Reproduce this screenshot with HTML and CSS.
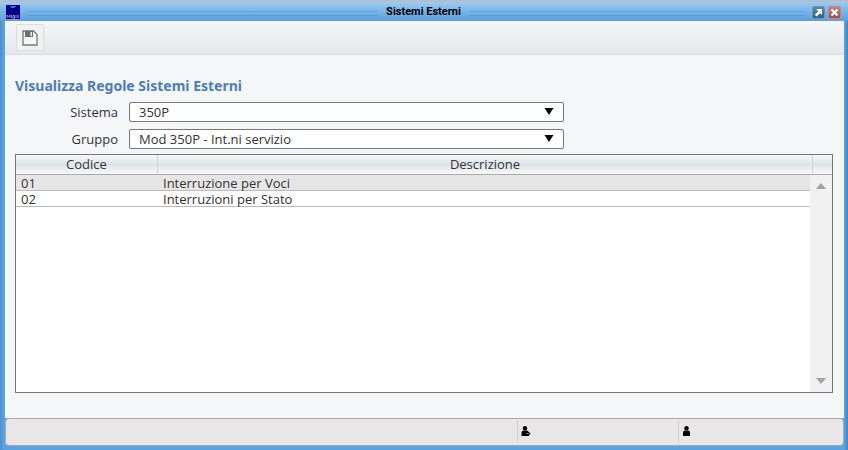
FILE: index.html
```
<!DOCTYPE html>
<html lang="it">
<head>
    <meta charset="UTF-8">
    <meta name="viewport" content="width=device-width, initial-scale=1.0">
    <title>Sistemi Esterni</title>
    <link rel="stylesheet" href="styles.css">
</head>
<body>
    <div class="window">
        <header class="titlebar">
            <div class="title-side">
                <svg class="app-icon" width="14" height="14" viewBox="0 0 14 14" aria-hidden="true">
                    <rect width="14" height="14" fill="#00008c"/>
                    <path d="M4 1.500h6M5 2.500h4" stroke="#5a5ac8" stroke-width="1"/>
                    <path d="M1 13V10l1.500 2L4 10v3M5.500 10v3M7 10.500h1.500v3H7zM10 10v3M12 10v3M11.500 11h1.500" fill="none" stroke="#b9a0dc" stroke-width=".8"/>
                </svg>
                <span class="stripes"></span>
            </div>
            <h1>Sistemi Esterni</h1>
            <div class="title-side">
                <span class="stripes"></span>
                <button type="button" class="win-btn" aria-label="Ingrandisci">
                    <svg width="9" height="9" viewBox="0 0 9 9"><path d="M2 1h6v6L6.200 5.200 2.500 8.500.800 6.800 4.300 3.300z" fill="#fff"/></svg>
                </button>
                <button type="button" class="win-btn win-close" aria-label="Chiudi">
                    <svg width="9" height="9" viewBox="0 0 9 9"><path d="M1.500 1.500l6 6M7.500 1.500l-6 6" stroke="#fff" stroke-width="2.200"/></svg>
                </button>
            </div>
        </header>

        <div class="toolbar">
            <button type="button" class="tool-btn" aria-label="Salva">
                <svg width="16" height="16" viewBox="0 0 16 16">
                    <path d="M1 1h10.500L15 4.500V15H1z" fill="#f6f6f6" stroke="#777" stroke-width="1.300"/>
                    <path d="M3 1h8v6H3z" fill="#6e6e6e"/>
                    <path d="M8.500 2H10v4H8.500z" fill="#eee"/>
                </svg>
            </button>
        </div>

        <main class="content">
            <h2>Visualizza Regole Sistemi Esterni</h2>
            <form class="filters">
                <label for="sistema">Sistema</label>
                <div class="select-box">
                    <select id="sistema" name="sistema">
                        <option>350P</option>
                    </select>
                    <svg class="arrow" width="10" height="7" viewBox="0 0 10 7" aria-hidden="true"><path d="M.500 0h9L5 7z"/></svg>
                </div>
                <label for="gruppo">Gruppo</label>
                <div class="select-box">
                    <select id="gruppo" name="gruppo">
                        <option>Mod 350P - Int.ni servizio</option>
                    </select>
                    <svg class="arrow" width="10" height="7" viewBox="0 0 10 7" aria-hidden="true"><path d="M.500 0h9L5 7z"/></svg>
                </div>
            </form>

            <div class="grid">
                <table>
                    <thead>
                        <tr>
                            <th class="col-code">Codice</th>
                            <th>Descrizione</th>
                            <th class="col-scroll"></th>
                        </tr>
                    </thead>
                    <tbody>
                        <tr class="selected">
                            <td>01</td>
                            <td colspan="2">Interruzione per Voci</td>
                        </tr>
                        <tr>
                            <td>02</td>
                            <td colspan="2">Interruzioni per Stato</td>
                        </tr>
                    </tbody>
                </table>
                <div class="scrollbar">
                    <button type="button" aria-label="Scorri su">
                        <svg width="10" height="6" viewBox="0 0 10 6"><path d="M5 0l5 6H0z"/></svg>
                    </button>
                    <button type="button" aria-label="Scorri giù">
                        <svg width="10" height="6" viewBox="0 0 10 6"><path d="M0 0h10L5 6z"/></svg>
                    </button>
                </div>
            </div>
        </main>

        <footer class="statusbar">
            <div class="status-cell"></div>
            <div class="status-cell">
                <svg width="10" height="10" viewBox="0 0 10 10" aria-hidden="true">
                    <circle cx="4" cy="2.300" r="2.200"/>
                    <path d="M.500 10V7q0-2.500 2-2.500h3q1.500 0 1.800 1L9.500 7.500 7.500 10z"/>
                    <path d="M5.500 7.500h2.500" stroke="#aaa" stroke-width=".8"/>
                </svg>
            </div>
            <div class="status-cell">
                <svg width="10" height="10" viewBox="0 0 10 10" aria-hidden="true">
                    <circle cx="4.500" cy="2.300" r="2.200"/>
                    <path d="M1 10V6.500q0-2 2-2h3q2 0 2 2V10z"/>
                </svg>
            </div>
        </footer>
    </div>
</body>
</html>
```
FILE: styles.css
```
* {
    box-sizing: border-box;
}

body {
    margin: 0;
    font-family: "Open Sans", "Noto Sans", sans-serif;
    font-size: 13px;
    color: #333;
}

.window {
    display: flex;
    flex-direction: column;
    min-height: 100vh;
    padding: 0 4px 4px 5px;
    background: linear-gradient(90deg, #4a8fd0, #5ba3e0 4px, #5ba3e0 calc(100% - 4px), #3f86ca);
}

/* Title bar */
.titlebar {
    display: grid;
    grid-template-columns: 1fr auto 1fr;
    align-items: center;
    height: 21px;
    margin: 0 -4px 0 -5px;
    padding: 1px 7px 0 6px;
    border-top: 2px solid #b4bfca;
    background: linear-gradient(#9ccbf3, #79b4e8 50%, #5b9fdb);
}

.title-side {
    display: flex;
    align-items: center;
    gap: 3px;
}

.stripes {
    flex: 1;
    height: 9px;
    margin: 0 4px;
    background: repeating-linear-gradient(transparent 0 3px, rgba(60, 120, 185, 0.3) 3px 4px);
}

h1 {
    margin: 0 4px;
    font: bold 11px Roboto, Arial, sans-serif;
    line-height: 14px;
    color: #000;
}

.win-btn {
    display: flex;
    align-items: center;
    justify-content: center;
    width: 13px;
    height: 13px;
    padding: 0;
    border: 1px solid #6c93b5;
    border-radius: 2px;
    background: linear-gradient(#5d87aa, #355f85);
}

.win-close {
    border-color: #b98a95;
    background: linear-gradient(#c9847f, #a84645);
}

/* Toolbar */
.toolbar {
    height: 34px;
    padding: 3px 11px;
    border-bottom: 1px solid #dcdddd;
    background: linear-gradient(#f5f6f7, #e6e7e8);
}

.tool-btn {
    display: flex;
    align-items: center;
    justify-content: center;
    width: 28px;
    height: 27px;
    padding: 0;
    border: 1px solid #dedede;
    border-radius: 2px;
    background: #f1f2f2;
}

/* Content */
.content {
    display: flex;
    flex: 1;
    flex-direction: column;
    padding: 20px 11px 25px 10px;
    background: #f4f6f8;
}

h2 {
    margin: 0 0 5px;
    font-family: "Noto Sans", "Open Sans", sans-serif;
    font-size: 14px;
    line-height: 22px;
    color: #4a7dc0;
}

.filters {
    display: grid;
    grid-template-columns: 103px minmax(0, 435px);
    gap: 7px 11px;
    margin-bottom: 5px;
}

.filters label {
    line-height: 20px;
    text-align: right;
}

.select-box {
    position: relative;
}

select {
    display: block;
    width: 100%;
    height: 20px;
    padding: 0 9px;
    appearance: none;
    border: 1px solid #777;
    border-radius: 2px;
    background: #fff;
    font: inherit;
    color: #333;
}

.arrow {
    position: absolute;
    top: 6px;
    right: 10px;
    pointer-events: none;
}

/* Data grid */
.grid {
    position: relative;
    flex: 1;
    border: 1px solid #777;
    background: #fff;
}

table {
    width: 100%;
    border-collapse: separate;
    border-spacing: 0;
    table-layout: fixed;
}

th {
    height: 20px;
    padding: 0;
    border-right: 1px solid #cfd3d7;
    border-bottom: 1px solid #aaa;
    background: linear-gradient(#f7f8f9, #dfe3e8 50%, #f8f9fa);
    font-weight: normal;
    line-height: 19px;
}

.col-code {
    width: 142px;
}

.col-scroll {
    width: 19px;
    border-right: none;
}

td {
    height: 16px;
    padding: 2px 5px 0;
    border-bottom: 1px solid #bbb;
    line-height: 13px;
}

.selected td {
    background: #e6e6e6;
}

.scrollbar {
    position: absolute;
    top: 20px;
    right: 0;
    bottom: 0;
    display: flex;
    flex-direction: column;
    justify-content: space-between;
    width: 22px;
    background: #f1f1f1;
}

.scrollbar button {
    display: flex;
    align-items: center;
    justify-content: center;
    height: 22px;
    padding: 0;
    border: none;
    background: none;
}

.scrollbar svg {
    fill: #a3a3a3;
}

/* Status bar */
.statusbar {
    display: grid;
    grid-template-columns: 512fr 162fr 165fr;
    height: 28px;
    padding: 1px 0 3px;
    border: 1px solid #aaa;
    border-radius: 4px;
    background: #e8e6e6;
}

.status-cell {
    display: flex;
    align-items: center;
    padding-left: 3px;
}

.status-cell + .status-cell {
    border-left: 1px solid #cfcfcf;
}
```
